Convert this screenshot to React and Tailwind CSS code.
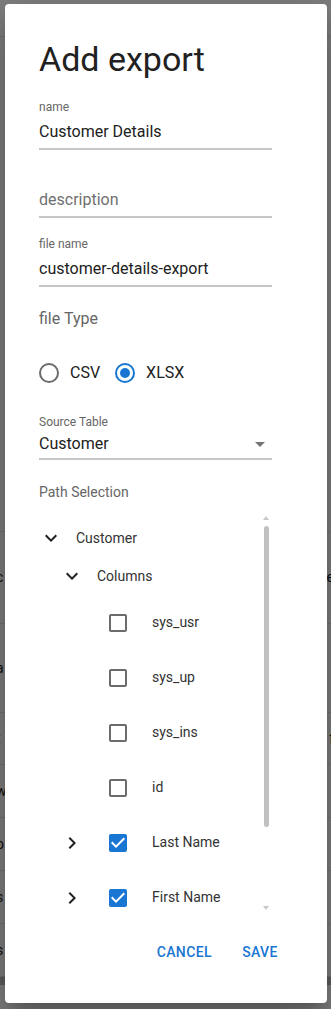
import React from 'react';

// MUI-style icon paths
const ExpandMore = () => (
    <svg viewBox="0 0 24 24" className="w-6 h-6 fill-[#212121]">
        <path d="M16.59 8.59 12 13.17 7.41 8.59 6 10l6 6 6-6z" />
    </svg>
);

const ChevronRight = () => (
    <svg viewBox="0 0 24 24" className="w-6 h-6 fill-[#212121]">
        <path d="M10 6 8.59 7.41 13.17 12l-4.58 4.59L10 18l6-6z" />
    </svg>
);

const Checkbox = ({ checked }) => (
    <svg viewBox="0 0 24 24" className={`w-6 h-6 ${checked ? 'fill-[#1976d2]' : 'fill-[#6b6b6b]'}`}>
        {checked ? (
            <path d="M19 3H5c-1.11 0-2 .9-2 2v14c0 1.1.89 2 2 2h14c1.11 0 2-.9 2-2V5c0-1.1-.89-2-2-2zm-9 14l-5-5 1.41-1.41L10 14.17l7.59-7.59L19 8l-9 9z" />
        ) : (
            <path d="M19 5v14H5V5h14m0-2H5c-1.1 0-2 .9-2 2v14c0 1.1.9 2 2 2h14c1.1 0 2-.9 2-2V5c0-1.1-.9-2-2-2z" />
        )}
    </svg>
);

const Radio = ({ checked }) => (
    <svg viewBox="0 0 24 24" className="w-6 h-6">
        <circle cx="12" cy="12" r="9" fill="none" strokeWidth="2" stroke={checked ? '#1976d2' : '#6b6b6b'} />
        {checked && <circle cx="12" cy="12" r="5" fill="#1976d2" />}
    </svg>
);

const TextField = ({ label, value, placeholder, className = '' }) => (
    <div className={`w-[233px] pb-[4px] border-b-2 border-[#c6c6c6] ${className}`}>
        <div className="h-4 text-[12px] leading-4 text-[#666]">{label}</div>
        <div className={`mt-[5px] h-6 text-[16px] leading-6 ${value ? 'text-[#212121]' : 'text-[#6f6f6f]'}`}>
            {value || placeholder}
        </div>
    </div>
);

const columns = [
    { name: 'sys_usr', checked: false },
    { name: 'sys_up', checked: false },
    { name: 'sys_ins', checked: false },
    { name: 'id', checked: false },
    { name: 'Last Name', checked: true, expandable: true },
    { name: 'First Name', checked: true, expandable: true },
];

// rows of the page behind the backdrop (only their edges show)
const pageRows = [
    { h: 'h-[92px]', left: 'c', right: 'e' },
    { h: 'h-[89px]', left: 'a', right: '' },
    { h: 'h-[52px]', left: 't', right: 'f' },
    { h: 'h-[53px]', left: 'w', right: '' },
    { h: 'h-[53px]', left: 'o', right: '' },
    { h: 'h-[53px]', left: 's', right: '' },
    { h: 'h-[53px]', left: 's', right: '' },
];

const App = () => {
    return (
        <div className="relative w-[331px] h-[1009px] overflow-hidden bg-white font-[Roboto,sans-serif]">
            {/* Page behind the dialog */}
            <div className="flex flex-col text-[14px] text-[#212121]">
                <div className="h-[37px] border-b border-[#e0e0e0] flex justify-end items-start pt-[6px]">
                    <span className="mr-[-3px] text-[14px]">i</span>
                </div>
                <div className="h-[495px] border-b border-[#e0e0e0]" />
                {pageRows.map((row, i) => (
                    <div key={i} className={`${row.h} border-b border-[#e0e0e0] flex items-center justify-between`}>
                        <span className="ml-[-4px]">{row.left}</span>
                        <span className="mr-[-3px]">{row.right}</span>
                    </div>
                ))}
                <div className="h-[8px] bg-[#bdbdbd]" />
            </div>

            {/* Backdrop */}
            <div className="absolute inset-0 bg-black/50" />

            {/* Dialog */}
            <div className="absolute left-[5px] top-[4px] w-[322px] h-[999px] bg-white rounded-[4px] shadow-[0_11px_15px_-7px_rgba(0,0,0,0.2),0_24px_38px_3px_rgba(0,0,0,0.14),0_9px_46px_8px_rgba(0,0,0,0.12)] flex flex-col">
                <div className="pl-[34px] flex flex-col">
                    <h2 className="pt-[35px] text-[34px] leading-[40px] text-[#212121]">Add export</h2>

                    <TextField className="mt-[20px]" label="name" value="Customer Details" />
                    <TextField className="mt-[17px]" label="" placeholder="description" />
                    <TextField className="mt-[18px]" label="file name" value="customer-details-export" />

                    <div className="mt-[20px] h-6 text-[16px] leading-6 text-[#666]">file Type</div>

                    {/* Radio group */}
                    <div className="mt-[21px] h-[42px] flex items-center text-[16px] text-[#212121] ml-[-2px]">
                        <Radio checked={false} />
                        <span className="ml-[9px]">CSV</span>
                        <span className="ml-[13px] flex items-center">
                            <Radio checked />
                        </span>
                        <span className="ml-[9px]">XLSX</span>
                    </div>

                    {/* Source Table select */}
                    <div className="mt-[20px] w-[233px] pb-[2px] border-b-2 border-[#c6c6c6]">
                        <div className="h-4 text-[12px] leading-4 text-[#666]">Source Table</div>
                        <div className="mt-[2px] h-6 flex items-center justify-between text-[16px] leading-6 text-[#212121]">
                            <span>Customer</span>
                            <svg viewBox="0 0 24 24" className="w-6 h-6 fill-[#757575]">
                                <path d="M7 10l5 5 5-5z" />
                            </svg>
                        </div>
                    </div>

                    <div className="mt-[20px] h-6 text-[14px] leading-6 text-[#666]">Path Selection</div>

                    {/* Tree */}
                    <div className="relative mt-[9px] w-[233px] h-[402px] overflow-hidden pt-[6px] text-[14px] text-[#333]">
                        <div className="h-[38px] flex items-center">
                            <ExpandMore />
                            <span className="ml-[13px]">Customer</span>
                        </div>
                        <div className="h-[38px] flex items-center pl-[21px]">
                            <ExpandMore />
                            <span className="ml-[13px]">Columns</span>
                        </div>
                        {columns.map((col) => (
                            <div key={col.name} className="h-[55px] flex items-center pl-[21px]">
                                <span className="w-6 h-6">{col.expandable && <ChevronRight />}</span>
                                <span className="ml-[22px]">
                                    <Checkbox checked={col.checked} />
                                </span>
                                <span className="ml-[22px]">{col.name}</span>
                            </div>
                        ))}

                        {/* Scrollbar */}
                        <svg viewBox="0 0 6 4" className="absolute right-[3px] top-[3px] w-[6px] h-[4px] fill-[#c8c8c8]">
                            <path d="M3 0 6 4H0z" />
                        </svg>
                        <div className="absolute right-[3px] top-[13px] w-[5px] h-[301px] rounded-full bg-[#c1c1c1]" />
                        <svg viewBox="0 0 6 4" className="absolute right-[3px] top-[393px] w-[6px] h-[4px] fill-[#c8c8c8]">
                            <path d="M0 0h6L3 4z" />
                        </svg>
                    </div>
                </div>

                {/* Actions */}
                <div className="mt-[19px] pr-[35px] flex justify-end gap-[8px]">
                    <button className="h-9 min-w-[64px] px-2 text-[14px] font-medium tracking-[0.4px] uppercase text-[#1976d2]">
                        Cancel
                    </button>
                    <button className="h-9 min-w-[64px] px-2 text-[14px] font-medium tracking-[0.4px] uppercase text-[#1976d2]">
                        Save
                    </button>
                </div>
            </div>
        </div>
    );
};

export default App;
